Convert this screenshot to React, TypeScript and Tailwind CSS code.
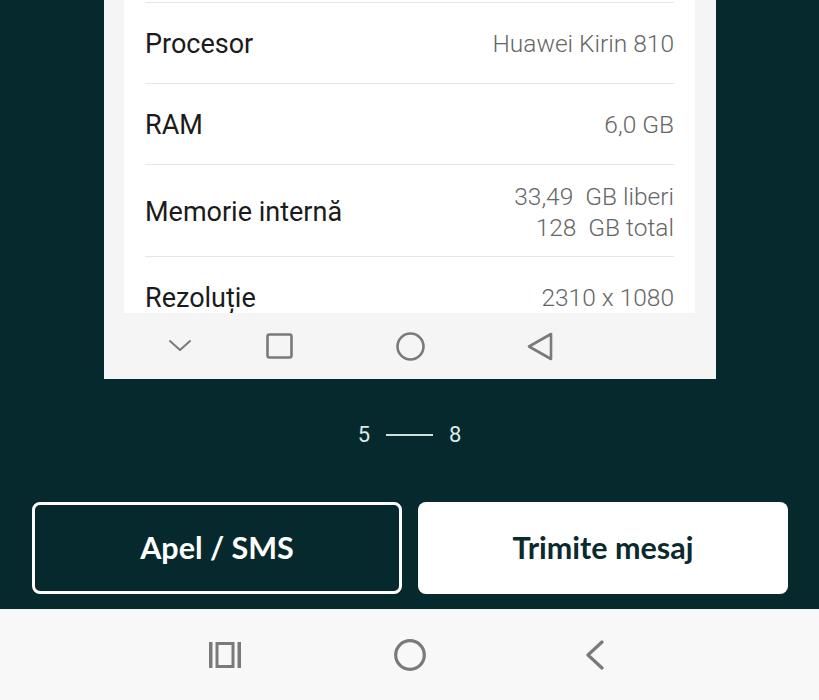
import React from "react";

const Row = ({ label, children, h }: { label: string; children: React.ReactNode; h: string }) => (
  <div className={`flex items-center justify-between border-t border-[#e6e6e6] pt-[3px] ${h}`}>
    <span className="text-[27px] leading-none text-[#1b1b1b]">{label}</span>
    <div className="text-right text-[24.5px] font-light text-[#666666]">{children}</div>
  </div>
);

export default function App() {
  return (
    <div
      className="w-[819px] h-[700px] bg-[#06292d] flex flex-col overflow-hidden"
      style={{ fontFamily: "Roboto, 'Noto Sans', sans-serif" }}
    >
      {/* screenshot card */}
      <div className="ml-[104px] w-[612px] h-[379px] bg-[#f5f5f5] flex flex-col shrink-0">
        <div className="ml-[20px] w-[571px] h-[313px] bg-white overflow-hidden px-[21px] pt-[2px] shrink-0">
          <Row label="Procesor" h="h-[81px]">
            <span>Huawei Kirin 810</span>
          </Row>
          <Row label="RAM" h="h-[81px]">
            <span>6,0 GB</span>
          </Row>
          <Row label="Memorie internă" h="h-[92px]">
            <div className="leading-[31px] whitespace-pre">33,49  GB liberi</div>
            <div className="leading-[31px] whitespace-pre">128  GB total</div>
          </Row>
          <Row label="Rezoluție" h="h-[81px]">
            <span>2310 x 1080</span>
          </Row>
        </div>
        <div className="flex-1 flex items-center">
          <div className="ml-[56px] w-[40px] flex justify-center">
            <svg width="24" height="14" viewBox="0 0 24 14" fill="none">
              <path d="M2 2 L12 11 L22 2" stroke="#7a7a7a" strokeWidth="2" strokeLinecap="round" strokeLinejoin="round" />
            </svg>
          </div>
          <div className="ml-[59px] w-[40px] flex justify-center">
            <svg width="27" height="26" viewBox="0 0 27 26" fill="none">
              <rect x="1.5" y="1.5" width="24" height="23" rx="2" stroke="#7a7a7a" strokeWidth="2.6" />
            </svg>
          </div>
          <div className="ml-[91px] w-[40px] flex justify-center">
            <svg width="29" height="29" viewBox="0 0 29 29" fill="none">
              <circle cx="14.5" cy="14.5" r="13" stroke="#7a7a7a" strokeWidth="2.6" />
            </svg>
          </div>
          <div className="ml-[90px] w-[40px] flex justify-center">
            <svg width="26" height="29" viewBox="0 0 26 29" fill="none">
              <path d="M24 2 L24 27 L2 14.5 Z" stroke="#7a7a7a" strokeWidth="2.6" strokeLinejoin="round" />
            </svg>
          </div>
        </div>
      </div>

      {/* pagination */}
      <div className="mt-[44px] h-[24px] flex items-center justify-center gap-[16px] text-[22px] leading-none text-[#dde9e9] shrink-0">
        <span>5</span>
        <span className="block w-[47px] h-[2px] bg-[#cfdede]" />
        <span>8</span>
      </div>

      {/* buttons */}
      <div
        className="mt-[55px] pl-[32px] pr-[31px] grid grid-cols-2 gap-[16px] shrink-0"
        style={{ fontFamily: "Lato, 'Open Sans', sans-serif" }}
      >
        <button className="h-[92px] rounded-[8px] border-[3px] border-white bg-transparent text-white text-[30.5px] font-bold">
          Apel / SMS
        </button>
        <button className="h-[92px] rounded-[8px] bg-white text-[#0b2a2e] text-[30.5px] font-bold">
          Trimite mesaj
        </button>
      </div>

      {/* system nav */}
      <div className="mt-[15px] flex-1 bg-[#f8f8f8] border-t border-[#eef2f3] flex items-center justify-center gap-[145px]">
        <div className="w-[40px] flex justify-center">
          <svg width="32" height="26" viewBox="0 0 32 26" fill="none">
            <rect x="0" y="0" width="3.5" height="26" fill="#7a7a7a" />
            <rect x="8" y="1.5" width="16" height="23" stroke="#7a7a7a" strokeWidth="3" />
            <rect x="28.5" y="0" width="3.5" height="26" fill="#7a7a7a" />
          </svg>
        </div>
        <div className="w-[40px] flex justify-center">
          <svg width="32" height="32" viewBox="0 0 32 32" fill="none">
            <circle cx="16" cy="16" r="14.3" stroke="#7a7a7a" strokeWidth="3.2" />
          </svg>
        </div>
        <div className="w-[40px] flex justify-center">
          <svg width="20" height="30" viewBox="0 0 20 30" fill="none">
            <path d="M17 2 L3 15 L17 28" stroke="#7a7a7a" strokeWidth="3.2" strokeLinecap="round" strokeLinejoin="round" />
          </svg>
        </div>
      </div>
    </div>
  );
}
